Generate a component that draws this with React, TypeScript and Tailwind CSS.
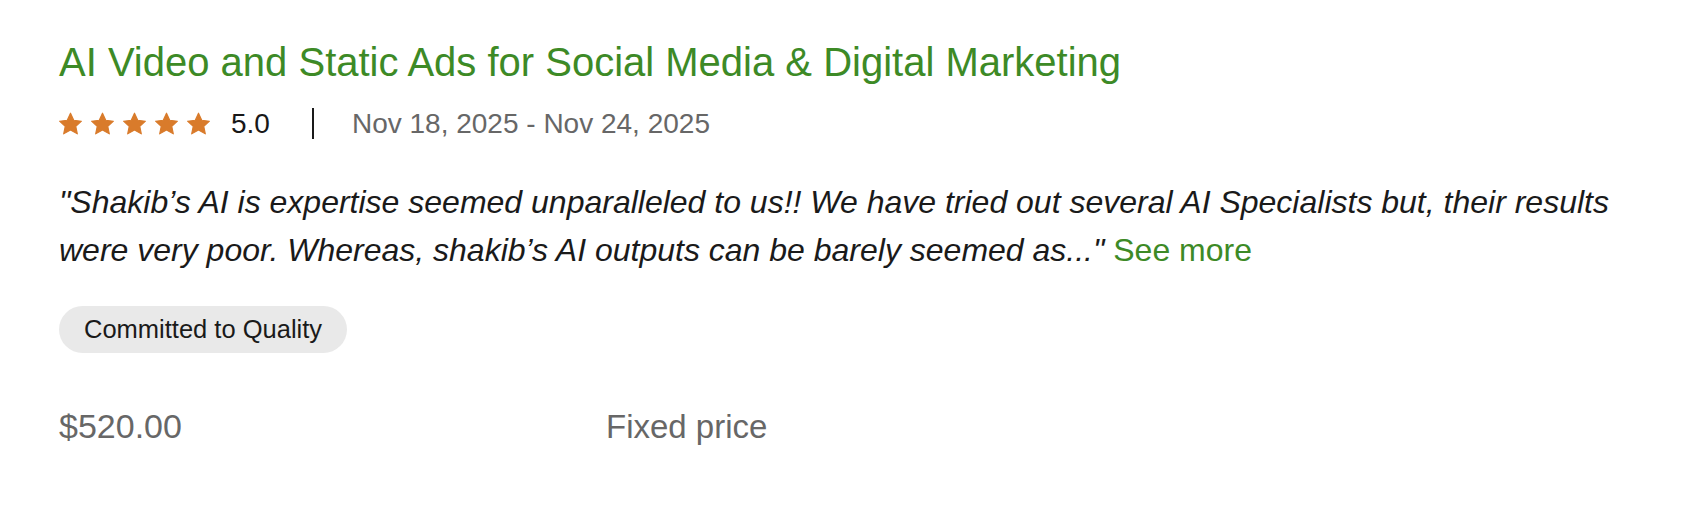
const green = "text-[#3d8a26]";

function Star() {
  return (
    <svg viewBox="0 0 24 24" className="h-[23px] w-[23px] overflow-visible" aria-hidden="true">
      <path
        d="M12 1.2L15.4 8.6 23.4 9.6 17.5 15 19.1 22.8 12 18.9 4.9 22.8 6.5 15 .6 9.6 8.6 8.6Z"
        fill="#d97b2b"
        stroke="#d97b2b"
        strokeWidth="1.2"
        strokeLinejoin="round"
      />
    </svg>
  );
}

export default function App() {
  return (
    <div className="min-h-screen bg-white pl-[59px] pt-[38px] font-['Liberation_Sans',Arial,sans-serif]">
      <h2 className={`text-[40px] leading-[48px] ${green}`}>
        AI Video and Static Ads for Social Media &amp; Digital Marketing
      </h2>

      <div className="mt-[22px] flex h-[31px] items-center">
        <div className="flex items-center gap-[9px]">
          {[0, 1, 2, 3, 4].map((i) => (
            <Star key={i} />
          ))}
        </div>
        <span className="ml-[21px] text-[28px] leading-none text-[#181818]">5.0</span>
        <span aria-hidden="true" className="ml-[42px] h-[31px] w-[2px] bg-[#1a1a1a]" />
        <span className="ml-[38px] text-[28px] leading-none text-[#676767]">
          Nov 18, 2025 - Nov 24, 2025
        </span>
      </div>

      <p className="mt-[39px] max-w-[1600px] text-[32px] leading-[48px] text-[#1a1a1a] italic">
        "Shakib’s AI is expertise seemed unparalleled to us!! We have tried out several AI
        Specialists but, their results were very poor. Whereas, shakib’s AI outputs can be
        barely seemed as..."{" "}
        <a href="#" className={`${green} not-italic no-underline`}>
          See more
        </a>
      </p>

      <div className="mt-8">
        <span className="inline-flex h-[47px] items-center rounded-full bg-[#e9e9e9] px-[25px] text-[25.5px] text-[#1a1a1a]">
          Committed to Quality
        </span>
      </div>

      <div className="mt-[53px] flex items-baseline leading-[40px] text-[#676767]">
        <span className="w-[547px] text-[34px]">$520.00</span>
        <span className="text-[33px]">Fixed price</span>
      </div>
    </div>
  );
}
